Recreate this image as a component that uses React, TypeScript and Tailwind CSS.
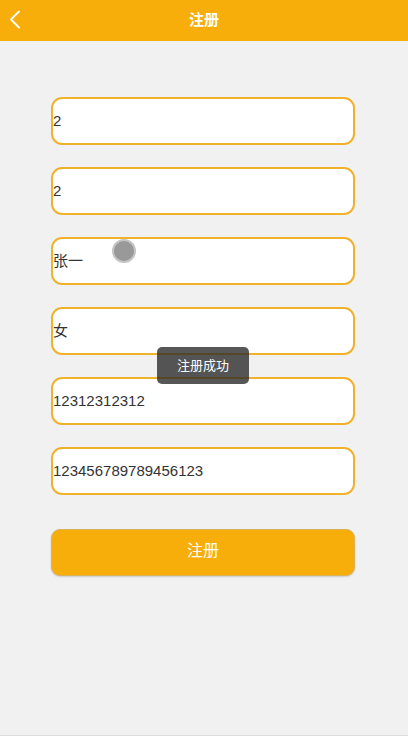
import React from "react";

const values = ["2", "2", "张一", "女", "12312312312", "123456789789456123"];

export default function App() {
  return (
    <div
      className="relative w-[408px] h-[736px] bg-[#f1f1f1] overflow-hidden border-b border-[#dedede]"
      style={{ fontFamily: '"Liberation Sans", Arial, "Noto Sans CJK SC", sans-serif' }}
    >
      <header className="relative h-[41px] bg-[#f7ae0a] flex items-center justify-center">
        <button className="absolute left-[7px] top-[9px] w-[16px] h-[20px] flex items-center justify-center">
          <svg width="12" height="19" viewBox="0 0 12 19" fill="none">
            <path d="M10 1.5 L2 9.5 L10 17.5" stroke="white" strokeWidth="1.8" strokeLinecap="round" strokeLinejoin="round" />
          </svg>
        </button>
        <h1 className="text-white font-bold text-[15px] leading-none -mt-[2px]">注册</h1>
      </header>

      <div className="flex flex-col gap-[22px] pl-[51px] pr-[53px] pt-[56px]">
        {values.map((v, i) => (
          <div
            key={i}
            className="h-[48px] bg-white border-2 border-[#f0b22c] rounded-[11px] flex items-center text-[15px] text-[#333]"
          >
            <span className="pl-0">{v}</span>
          </div>
        ))}
        <button className="mt-[12px] h-[47px] bg-[#f7ae0a] rounded-[9px] border border-[#d9b25a] shadow-[0_1px_2px_rgba(0,0,0,0.15)] text-white text-[16px] flex items-center justify-center pb-[3px]">
          注册
        </button>
      </div>

      <div className="absolute left-[157px] top-[347px] w-[92px] h-[37px] rounded-[5px] bg-[rgba(40,40,40,0.78)] flex items-center justify-center text-white text-[13px]">
        注册成功
      </div>

      <div className="absolute left-[112px] top-[239px] w-[24px] h-[24px] rounded-full bg-[#999] border-2 border-[#c4c4c4]" />
    </div>
  );
}
